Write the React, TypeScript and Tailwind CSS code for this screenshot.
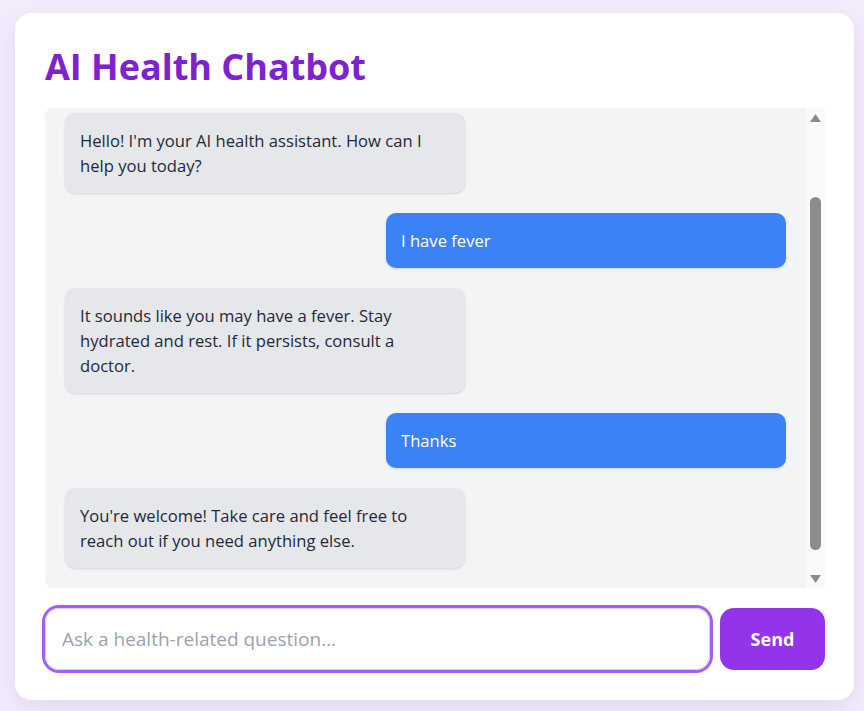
type Msg = { from: "bot" | "user"; text: string };

const messages: Msg[] = [
  { from: "bot", text: "Hello! I'm your AI health assistant. How can I help you today?" },
  { from: "user", text: "I have fever" },
  {
    from: "bot",
    text: "It sounds like you may have a fever. Stay hydrated and rest. If it persists, consult a doctor.",
  },
  { from: "user", text: "Thanks" },
  {
    from: "bot",
    text: "You're welcome! Take care and feel free to reach out if you need anything else.",
  },
];

export default function App() {
  return (
    <div className="min-h-[711px] bg-[#f4ecfd] pt-[13px] pl-[15px] font-['Open_Sans','Noto_Sans',sans-serif]">
      <div className="w-[839px] h-[687px] rounded-2xl bg-white py-[30px] pl-[30px] pr-[29px] flex flex-col shadow-[0_8px_24px_rgba(80,40,120,0.10)]">
        <h1 className="mt-1 mb-[21px] text-4xl leading-10 font-bold text-[#7e22ce]">AI Health Chatbot</h1>

        {/* Messages + scrollbar */}
        <div className="flex h-[480px]">
          <div className="flex-1 overflow-hidden rounded-tl-lg rounded-bl-lg bg-[#f3f4f6]">
            <div className="flex flex-col gap-5 px-5 pt-[5px] pb-5">
              {messages.map((m, i) =>
                m.from === "bot" ? (
                  <div
                    key={i}
                    className="self-start w-[400px] rounded-[10px] bg-[#e5e7eb] p-[15px] text-[16.6px] leading-[25px] text-[#1f2937] shadow-sm"
                  >
                    {m.text}
                  </div>
                ) : (
                  <div
                    key={i}
                    className="self-end w-[400px] rounded-[10px] bg-[#3b82f6] p-[15px] text-[16.6px] leading-[25px] text-white shadow-sm"
                  >
                    {m.text}
                  </div>
                )
              )}
            </div>
          </div>
          <div className="w-[19px] bg-[#fafafa] flex flex-col items-center pt-[6px] pb-[5px]">
            <svg viewBox="0 0 11 8" className="w-[11px] h-[8px]">
              <path d="M5.5 0 11 8H0z" fill="#8c8c8c" />
            </svg>
            <div className="mt-[75px] w-[11px] h-[353px] rounded-full bg-[#8c8c8c]" />
            <div className="flex-1" />
            <svg viewBox="0 0 11 8" className="w-[11px] h-[8px]">
              <path d="M0 0h11L5.5 8z" fill="#8c8c8c" />
            </svg>
          </div>
        </div>

        {/* Input row */}
        <div className="mt-5 flex gap-2.5">
          <input
            type="text"
            placeholder="Ask a health-related question..."
            className="flex-1 h-[62px] rounded-[14px] border border-gray-300 px-4 text-[19px] text-[#1f2937] placeholder:text-[#9ca3af] outline-none ring-[3px] ring-[#a35cf6]"
          />
          <button
            type="button"
            className="w-[105px] h-[62px] rounded-[14px] bg-[#9333ea] text-lg font-bold text-white"
          >
            Send
          </button>
        </div>
      </div>
    </div>
  );
}
